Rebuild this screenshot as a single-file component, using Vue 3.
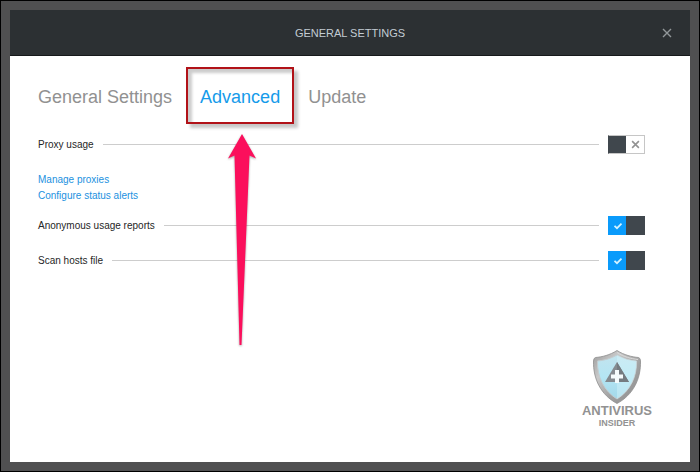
<script setup>
import { ref } from 'vue'

const tabs = ['General Settings', 'Advanced', 'Update']
const active = ref('Advanced')
const proxy = ref([{ id: 'proxy', label: 'Proxy usage', on: false }])
const options = ref([
  { id: 'reports', label: 'Anonymous usage reports', on: true },
  { id: 'hosts', label: 'Scan hosts file', on: true },
])
const groups = [proxy, options]
</script>

<template>
  <div class="frame">
    <section class="dialog">
      <header class="bar">
        <h1>GENERAL SETTINGS</h1>
        <button class="close" type="button" aria-label="Close">
          <svg width="10" height="10" viewBox="0 0 10 10">
            <path d="M1 1L9 9M9 1L1 9" stroke="#92979a" stroke-width="1.4" />
          </svg>
        </button>
      </header>

      <main class="content">
        <nav class="tabs">
          <div v-for="tab in tabs" :key="tab" class="tab">
            <button type="button" :class="{ active: tab === active }" @click="active = tab">{{ tab }}</button>
            <template v-if="tab === 'Advanced'">
              <span class="highlight"></span>
              <svg class="arrow" width="34" height="216" viewBox="0 0 34 216" aria-hidden="true">
                <path d="M17 2L31 26.500L24.500 23.500L16.500 213H14.500L9.500 23.500L3 26.500Z" fill="#fb0f5c" />
              </svg>
            </template>
          </div>
        </nav>

        <div v-for="(group, index) in groups" :key="index" class="group">
          <div v-for="row in group.value" :key="row.id" class="row">
            <label :for="row.id">{{ row.label }}</label>
            <span class="rule"></span>
            <span class="toggle" :class="{ on: row.on }">
              <input :id="row.id" v-model="row.on" type="checkbox" />
              <span class="cell">
                <svg v-if="row.on" width="10" height="8" viewBox="0 0 10 8">
                  <path d="M1.500 3.800L4 6.200L8.500 1.700" fill="none" stroke="#d5f3ff" stroke-width="1.700" />
                </svg>
              </span>
              <span class="cell">
                <svg v-if="!row.on" width="9" height="9" viewBox="0 0 8 8">
                  <path d="M1 1L7 7M7 1L1 7" stroke="#929292" stroke-width="1.400" />
                </svg>
              </span>
            </span>
          </div>
          <div v-if="index === 0" class="links">
            <a href="#proxies">Manage proxies</a>
            <a href="#alerts">Configure status alerts</a>
          </div>
        </div>

        <footer class="brand">
          <svg width="48" height="54" viewBox="0 0 48 54" aria-hidden="true">
            <defs>
              <linearGradient id="rim" x1="0" y1="0" x2="1" y2="1">
                <stop offset="0" stop-color="#9a9a9a" />
                <stop offset=".3" stop-color="#c9c9c9" />
                <stop offset=".6" stop-color="#a2a2a2" />
                <stop offset="1" stop-color="#8c8c8c" />
              </linearGradient>
              <linearGradient id="face" x1="0" y1="0" x2="0" y2="1">
                <stop offset="0" stop-color="#c2e4ee" />
                <stop offset=".5" stop-color="#b4e5f3" />
                <stop offset="1" stop-color="#a3d9ea" />
              </linearGradient>
            </defs>
            <path d="M24 .5C31 5 39 7 45.500 7.500Q47.500 8 47.500 11C48 29 40 45 24 53.500C8 45 0 29 .5 11Q.5 8 2.500 7.500C9 7 17 5 24 .5Z" fill="url(#rim)" stroke="#8e8e8e" stroke-width=".8" />
            <path d="M24 2.500C31 7 38 8.700 45 9.500" fill="none" stroke="#dadada" />
            <path d="M24 5C30 8.500 37 10.500 43.500 11C44 27 37 41 24 49C11 41 4 27 4.500 11C11 10.500 18 8.500 24 5Z" fill="url(#face)" stroke="#c3cccf" stroke-width="1" />
            <path d="M24 5C30 8.500 37 10.500 43.500 11C44 27 37 41 24 49Z" fill="#d5f3fb" opacity=".45" />
            <path d="M24 12L36 32H12Z" fill="#858b90" />
            <path d="M24 12L36 32H24Z" fill="#747b80" />
            <path d="M22 20H26V24.500H30V28.500H26V33H22V28.500H18V24.500H22Z" fill="#f5fbfc" />
          </svg>
          <span class="name">ANTIVIRUS</span>
          <span class="sub">INSIDER</span>
        </footer>
      </main>
    </section>
  </div>
</template>

<style>
body {
  margin: 0;
}
</style>

<style scoped>
.frame {
  box-sizing: border-box;
  display: flex;
  min-height: 100vh;
  padding: 9px;
  border: 1px solid #000;
  background: #505051;
  font-family: "Liberation Sans", Arial, sans-serif;
}
.dialog {
  display: flex;
  flex: 1;
  flex-direction: column;
  background: #fff;
}
.bar {
  display: grid;
  grid-template-columns: 1fr auto 1fr;
  align-items: center;
  height: 45px;
  padding: 0 16px;
  border-bottom: 1px solid #16191b;
  background: #2c3033;
}
h1 {
  grid-column: 2;
  margin: 0;
  font-size: 11px;
  font-weight: 400;
  color: #c3ccd3;
}
button {
  padding: 0;
  border: 0;
  background: none;
  font-family: inherit;
  cursor: pointer;
}
.close {
  display: grid;
  justify-self: end;
  place-items: center;
  width: 14px;
  height: 14px;
}
.content {
  display: flex;
  flex: 1;
  flex-direction: column;
  padding: 28px 45px 34px 28px;
}
.tabs {
  display: flex;
  gap: 28px;
  margin-bottom: 25px;
}
.tab {
  position: relative;
}
.tab button {
  display: block;
  font-size: 18px;
  line-height: 26px;
  color: #919191;
}
.tab .active {
  color: #159bea;
}
.highlight {
  position: absolute;
  inset: -17px -14px -14px -14px;
  border: 2px solid #b11218;
  box-shadow: 4px 4px 3px rgba(0, 0, 0, 0.22), inset 4px 4px 3px rgba(0, 0, 0, 0.2);
  pointer-events: none;
}
.arrow {
  position: absolute;
  top: 48px;
  left: 25px;
  z-index: 1;
  filter: drop-shadow(0 1px 1px rgba(0, 0, 0, 0.35));
  pointer-events: none;
}
.group {
  display: flex;
  flex-direction: column;
  gap: 16px;
}
.row {
  display: flex;
  align-items: center;
  gap: 9px;
  height: 19px;
  font-size: 10px;
  line-height: 13px;
  color: #262626;
}
.rule {
  flex: 1;
  height: 1px;
  background: #cdcdcd;
}
.toggle {
  position: relative;
  display: grid;
  grid-template-columns: 1fr 1fr;
  box-sizing: border-box;
  width: 37px;
  height: 19px;
  border: 1px solid #c6c6c6;
  background: linear-gradient(90deg, #40474d 50%, #fff 50%);
  background-origin: border-box;
  border-left-color: #40474d;
}
.toggle.on {
  border-color: transparent;
  background: linear-gradient(90deg, #0a9bfb 50%, #40474d 50%);
  background-origin: border-box;
}
.toggle input {
  position: absolute;
  inset: 0;
  width: 100%;
  height: 100%;
  margin: 0;
  opacity: 0;
  cursor: pointer;
}
.cell {
  display: grid;
  place-items: center;
}
.links {
  display: flex;
  flex-direction: column;
  align-items: flex-start;
  padding: 2px 0 12px;
}
.links a {
  font-size: 10px;
  line-height: 16px;
  color: #1b91e0;
  text-decoration: none;
}
.brand {
  display: flex;
  flex-direction: column;
  align-items: center;
  align-self: flex-end;
  margin: auto -7px 0 0;
  color: #929292;
  font-weight: 700;
}
.name {
  font-size: 13px;
  line-height: 14px;
}
.sub {
  font-size: 9px;
  line-height: 10px;
}
</style>
